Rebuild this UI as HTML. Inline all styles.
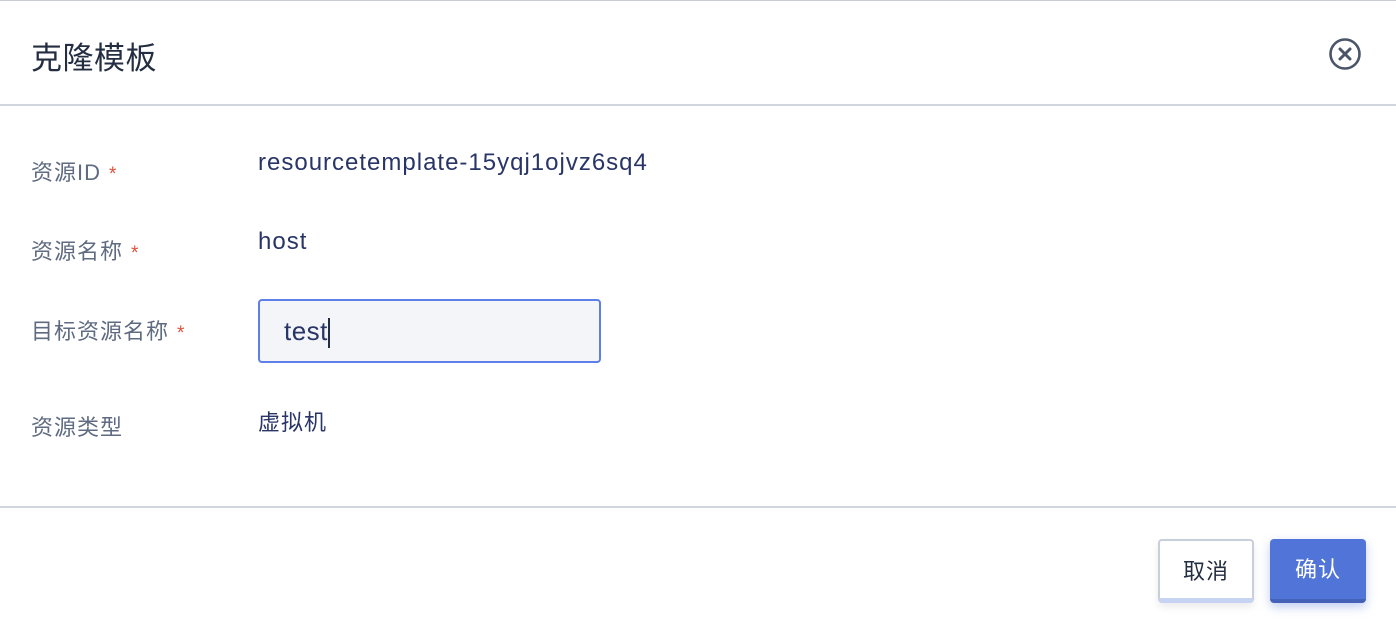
<!DOCTYPE html>
<html><head><meta charset="utf-8"><style>
*{margin:0;padding:0;box-sizing:border-box}
body{width:1396px;height:628px;background:#fff;font-family:"Liberation Sans","Noto Sans CJK SC",sans-serif;color:#242e42;position:relative;overflow:hidden}
.title{position:absolute;left:31px;top:33px;font-size:31px;color:#242e42;letter-spacing:0.5px}
.hr{position:absolute;left:0;width:1396px;height:2px;background:#d1d5de}
.lbl{position:absolute;left:31px;font-size:22px;color:#5f6b80;letter-spacing:1px}
.lbl b{color:#e0503a;font-weight:normal;margin-left:8px;font-size:19px}
.val{position:absolute;left:258px;font-size:24px;color:#283566;letter-spacing:1px}
.inp{position:absolute;left:258px;top:299px;width:343px;height:64px;border:2px solid #5e7ee8;border-radius:4px;background:#f4f5f9;font-size:26px;padding:15px 0 0 24px;letter-spacing:0.5px;color:#283566}
.btn{position:absolute;top:539px;height:64px;border-radius:4px;font-size:22px;text-align:center;line-height:62px;letter-spacing:1px}
</style></head><body>
<div style="position:absolute;left:0;top:0;width:1396px;height:1px;background:#c9ccd4"></div>
<div class="title">克隆模板</div>
<svg style="position:absolute;left:1328px;top:37px" width="34" height="34" viewBox="0 0 34 34"><circle cx="17" cy="17" r="14.5" fill="none" stroke="#4a5568" stroke-width="2.6"/><path d="M12 12L22 22M22 12L12 22" stroke="#4a5568" stroke-width="3" stroke-linecap="round"/></svg>
<div class="hr" style="top:104px"></div>
<div class="lbl" style="top:155px">资源ID<b>*</b></div>
<div class="val" style="top:149px">resourcetemplate-15yqj1ojvz6sq4</div>
<div class="lbl" style="top:234px">资源名称<b>*</b></div>
<div class="val" style="top:228px">host</div>
<div class="lbl" style="top:314px">目标资源名称<b>*</b></div>
<div class="inp">test<span style="border-left:2px solid #242e42;margin-left:0;height:30px;display:inline-block;vertical-align:middle"></span></div>
<div class="lbl" style="top:410px">资源类型</div>
<div class="val" style="top:405px;font-size:22px">虚拟机</div>
<div class="hr" style="top:506px"></div>
<div class="btn" style="left:1158px;width:96px;background:#fff;border:2px solid #c8ceda;border-bottom:5px solid #c7d3f2;box-shadow:0 4px 8px rgba(0,0,0,.08);color:#242e42">取消</div>
<div class="btn" style="left:1270px;width:96px;background:#5074d8;border-bottom:4px solid #4561b8;box-shadow:0 4px 10px rgba(80,116,216,.35);color:#fff">确认</div>
</body></html>
